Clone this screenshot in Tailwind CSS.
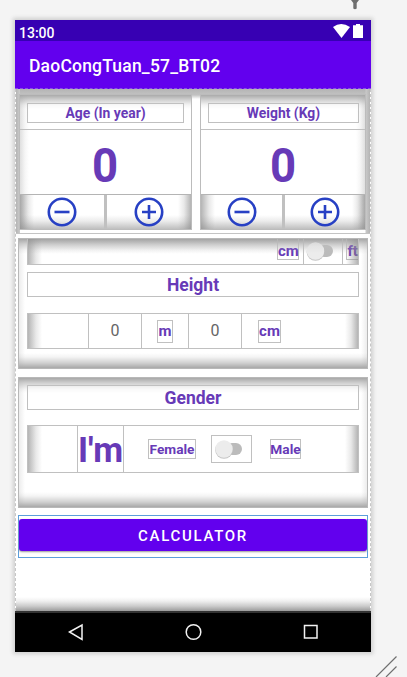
<!DOCTYPE html>
<html lang="en">
<head>
<meta charset="utf-8">
<title>DaoCongTuan_57_BT02</title>
<script src="https://cdn.jsdelivr.net/npm/@tailwindcss/browser@4"></script>
</head>
<body class="relative h-[677px] w-[407px] overflow-hidden bg-[#f4f4f4] pl-[15px] pt-[20px] font-['Roboto',sans-serif] font-bold text-[#673ab7]">
<svg class="absolute left-[348px] top-0" width="14" height="10"><path d="M3 0h8L8.700 3V8.500q-1.700 1.400-3.400 0V3Z" fill="#6e6e6e"/></svg>

<div class="flex h-[632px] w-[356px] flex-col bg-white shadow-[0_0_4px_2px_#cfcfcf]">
  <header class="flex h-[21px] shrink-0 items-center bg-[#3700b3] pl-[4px] pr-[7px] pt-[5px] text-[14px] font-medium text-white">
    <span class="grow">13:00</span>
    <svg class="-mt-[5px]" width="32" height="16" fill="#fff"><path d="M1 4Q9 -2 18 4L9.500 15Z"/><path d="M24 1h4v1.200h3V15H21V2.200h3Z"/></svg>
  </header>
  <div class="flex h-[48px] shrink-0 items-center border-b border-dashed border-[#8c50e8] bg-[#6200ee] pl-[14px] pt-[4px] text-[17.500px] font-medium tracking-[0.200px] text-white">DaoCongTuan_57_BT02</div>

  <main class="flex h-[522px] shrink-0 flex-col border-x border-dashed border-[#c6c6c6]">
    <section class="flex h-[145px] shrink-0 gap-[8px] border-b border-[#c4c4c4] bg-[linear-gradient(90deg,#b4b4b4,#cccccc_4px,transparent_4px,transparent_349px,#c8c8c8_350px,#b4b4b4),linear-gradient(180deg,#b4b4b4,#c2c2c2_6px,transparent_10px)] pl-[3px] pr-[4px] pt-[5px]">
      <div class="flex h-[136px] w-[173px] flex-col border border-[#bcbcbc] bg-white bg-[linear-gradient(90deg,#a0a0a055,#a0a0a018_5px,transparent_9px),linear-gradient(180deg,#aaaaaa,#d2d2d2_5px,#f4f4f4_10px,transparent_14px)]">
        <div class="ml-[7px] mt-[8px] flex h-[20px] w-[157px] items-center justify-center border border-[#c0c0c0] bg-white/40 text-[13.900px]">Age (In year)</div>
        <div class="mt-[6px] flex h-[65px] items-center justify-center border-t border-[#c0c0c0] pt-[6px] text-[49px] leading-none"><span class="inline-block scale-x-[0.930]">0</span></div>
        <div class="flex h-[35px] border-t border-[#b4b4b4] bg-[linear-gradient(90deg,#888888a0,#88888830_8px,transparent_14px,transparent_158px,#88888830_164px,#888888a0),linear-gradient(0deg,#999999a0,#99999930_8px,transparent_14px)]">
          <div class="flex w-[87px] items-center justify-center border-r-[3px] border-[#c0c0c0]"><svg width="30" height="30" fill="none" stroke="#2740c4" stroke-width="2.600"><circle cx="15" cy="15" r="13.200"/><path d="M7.500 15h15"/></svg></div>
          <div class="flex grow items-center justify-center"><svg width="30" height="30" fill="none" stroke="#2740c4" stroke-width="2.600"><circle cx="15" cy="15" r="13.200"/><path d="M8 15h14M15 8v14"/></svg></div>
        </div>
      </div>
      <div class="flex h-[136px] w-[166px] flex-col border border-[#bcbcbc] bg-white bg-[linear-gradient(270deg,#a0a0a055,#a0a0a018_5px,transparent_9px),linear-gradient(180deg,#aaaaaa,#d2d2d2_5px,#f4f4f4_10px,transparent_14px)]">
        <div class="ml-[7px] mt-[8px] flex h-[20px] w-[151px] items-center justify-center border border-[#c0c0c0] bg-white/40 text-[13.900px]">Weight (Kg)</div>
        <div class="mt-[6px] flex h-[65px] items-center justify-center border-t border-[#c0c0c0] pt-[6px] text-[49px] leading-none"><span class="inline-block scale-x-[0.930]">0</span></div>
        <div class="flex h-[35px] border-t border-[#b4b4b4] bg-[linear-gradient(90deg,#888888a0,#88888830_8px,transparent_14px,transparent_151px,#88888830_157px,#888888a0),linear-gradient(0deg,#999999a0,#99999930_8px,transparent_14px)]">
          <div class="flex w-[84px] items-center justify-center border-r-[3px] border-[#c0c0c0]"><svg width="30" height="30" fill="none" stroke="#2740c4" stroke-width="2.600"><circle cx="15" cy="15" r="13.200"/><path d="M7.500 15h15"/></svg></div>
          <div class="flex grow items-center justify-center"><svg width="30" height="30" fill="none" stroke="#2740c4" stroke-width="2.600"><circle cx="15" cy="15" r="13.200"/><path d="M8 15h14M15 8v14"/></svg></div>
        </div>
      </div>
    </section>

    <section class="ml-[2px] mt-[4px] h-[131px] w-[350px] shrink-0 border border-[#b8b8b8] bg-[linear-gradient(90deg,#aaaaaa38,transparent_6px,transparent_342px,#aaaaaa38),linear-gradient(180deg,#a8a8a8,#d0d0d0_5px,#f4f4f4_11px,transparent_15px),linear-gradient(0deg,#a8a8a8,#d0d0d0_5px,#f4f4f4_11px,transparent_15px)]">
      <div class="relative ml-[8px] flex h-[26px] w-[332px] border-x border-b border-[#c0c0c0] bg-[linear-gradient(90deg,#888888a0,#88888830_8px,transparent_14px)] text-[15px] leading-[24px]">
        <div class="ml-[249px] h-[21px] w-[22px] border-x border-b border-[#c0c0c0] text-center">cm</div>
        <div class="ml-[4px] w-[41px] border-x border-[#c0c0c0] pl-[2px] pt-[2px]"><svg width="32" height="22"><rect x="12" y="4" width="15" height="12" rx="6" fill="#bbb"/><circle cx="9.500" cy="11" r="8.800" fill="#c4c4c4"/><circle cx="9.500" cy="10" r="8.700" fill="#ececec"/></svg></div>
        <div class="ml-[3px] h-[21px] w-[12px] border-b border-l border-[#c0c0c0] text-center">ft</div>
        <div class="absolute inset-y-0 right-0 w-[12px] bg-linear-to-l from-[#888888a0] to-transparent"></div>
        <div class="absolute inset-x-0 top-0 h-[14px] bg-[linear-gradient(180deg,#a0a0a060,#c0c0c030_7px,transparent)]"></div>
      </div>
      <div class="ml-[8px] mt-[7px] flex h-[25px] w-[332px] items-center justify-center border border-[#c0c0c0] pt-[2px] text-[17.500px]">Height</div>
      <div class="ml-[8px] mt-[16px] flex h-[36px] w-[332px] items-center border border-[#c0c0c0] bg-[linear-gradient(90deg,#888888a0,#88888830_8px,transparent_14px,transparent_317px,#88888830_323px,#888888a0)] text-[15px]">
        <div class="ml-[60px] flex h-full w-[54px] items-center justify-center border-x border-[#c0c0c0] bg-white text-[16px] font-normal text-[#666]">0</div>
        <div class="ml-[15px] flex h-[23px] w-[16px] items-center justify-center border border-[#c0c0c0]">m</div>
        <div class="ml-[15px] flex h-full w-[54px] items-center justify-center border-x border-[#c0c0c0] bg-white text-[16px] font-normal text-[#666]">0</div>
        <div class="ml-[16px] flex h-[23px] w-[23px] items-center justify-center border border-[#c0c0c0]">cm</div>
      </div>
    </section>

    <section class="ml-[2px] mt-[8px] h-[131px] w-[350px] shrink-0 border border-[#b8b8b8] bg-[linear-gradient(90deg,#aaaaaa38,transparent_6px,transparent_342px,#aaaaaa38),linear-gradient(180deg,#a8a8a8,#d0d0d0_5px,#f4f4f4_11px,transparent_15px),linear-gradient(0deg,#a8a8a8,#d0d0d0_5px,#f4f4f4_11px,transparent_15px)]">
      <div class="ml-[8px] mt-[7px] flex h-[25px] w-[332px] items-center justify-center border border-[#c0c0c0] bg-white/40 pt-px text-[17.500px]">Gender</div>
      <div class="ml-[8px] mt-[15px] flex h-[48px] w-[332px] items-center border border-[#c0c0c0] bg-[linear-gradient(90deg,#888888a0,#88888830_8px,transparent_14px,transparent_317px,#88888830_323px,#888888a0)] text-[14px]">
        <div class="ml-[49px] flex h-full w-[47px] items-center justify-center border-x border-[#c0c0c0] pt-[3px] text-[34.500px]">I'm</div>
        <div class="ml-[24px] flex h-[20px] w-[48px] items-center justify-center border border-[#c0c0c0] text-[13.700px]">Female</div>
        <div class="ml-[15px] h-[28px] w-[41px] border border-[#c0c0c0] pl-[2px] pt-[3px]"><svg width="32" height="22"><rect x="12" y="4" width="16" height="12" rx="6" fill="#bbb"/><circle cx="10" cy="11" r="8.800" fill="#c4c4c4"/><circle cx="10" cy="10" r="8.700" fill="#ececec"/></svg></div>
        <div class="ml-[18px] flex h-[20px] w-[31px] items-center justify-center border border-[#c0c0c0] text-[13.700px]">Male</div>
      </div>
    </section>

    <div class="ml-[2px] mt-[7px] h-[43px] w-[350px] shrink-0 border border-[#5b9edb] pt-[3px]">
      <button class="flex h-[32px] w-full items-center justify-center rounded-[3px] bg-[#6200ee] pt-[2px] text-[15px] font-medium tracking-[1.700px] text-white shadow-[0_1px_2px_#999]">CALCULATOR</button>
    </div>
    <div class="grow bg-[linear-gradient(0deg,#9c9c9c,#cccccc_5px,#f0f0f0_10px,transparent_14px)]"></div>
  </main>
  <div class="h-[2px] shrink-0 border-y border-[#333] bg-[#888]"></div>
  <nav class="flex h-[39px] shrink-0 items-center bg-black">
    <svg width="356" height="39" fill="none" stroke="#f2f2f2" stroke-width="1.500"><path d="M54.500 19 67 12v14.500Z"/><circle cx="178.500" cy="19" r="7.300"/><path d="M289.500 12.500h12.500v12.500H289.500Z"/></svg>
  </nav>
</div>
<svg class="absolute left-[372px] top-[652px]" width="35" height="25" stroke="#707070" stroke-width="1.200"><path d="M4 25 24.500 4.500M14 25 24.500 14.500"/></svg>
</body>
</html>
